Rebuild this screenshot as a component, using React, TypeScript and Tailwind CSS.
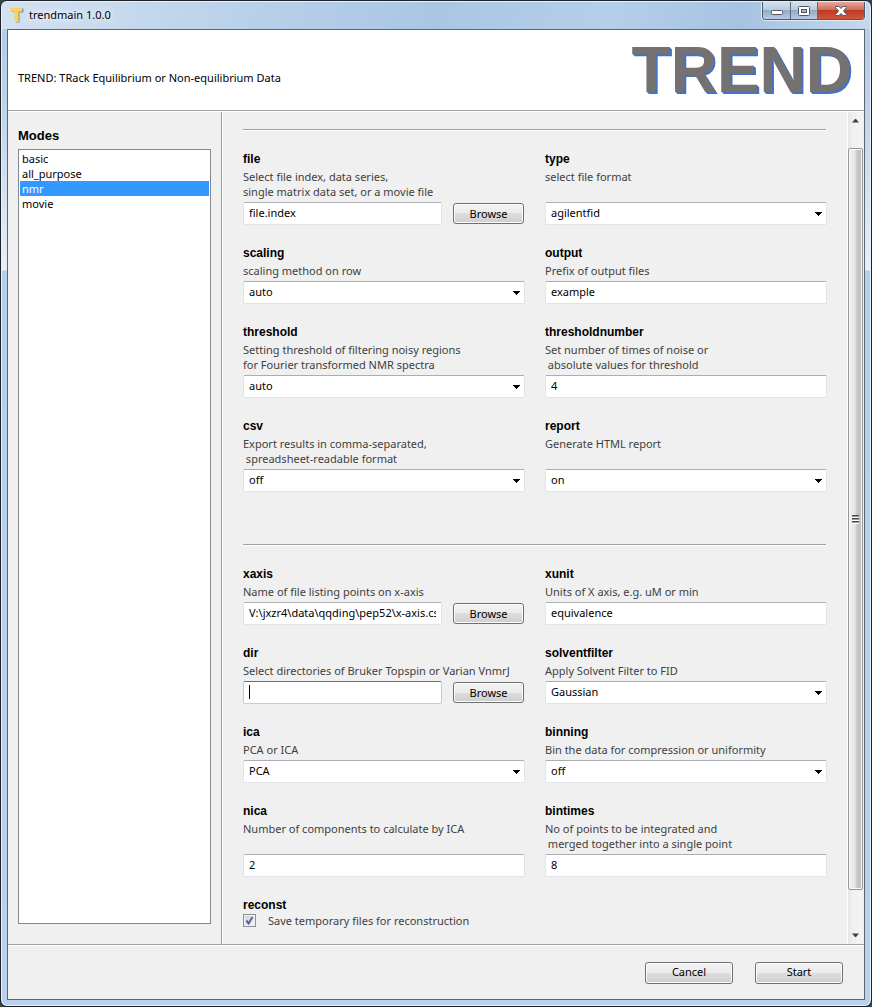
import React from "react";

const modes = ["basic", "all_purpose", "nmr", "movie"];

type FieldProps = {
  name: string;
  help: string;
  kind?: "text" | "select" | "browse";
  value: string;
  focused?: boolean;
};

const boxBase =
  "h-[23px] w-full min-w-0 rounded-[2px] border border-[#e2e3ea] border-t-[#abadb3] bg-white px-[5px] pb-[2px] text-[11px] text-black outline-none";
const boxFocused =
  "h-[23px] w-full min-w-0 rounded-[2px] border border-[#b5cfe7] border-t-[#3d7bad] bg-white px-[5px] pb-[2px] text-[11px] text-black caret-transparent outline-none";

function PushButton({ children, className }: { children: React.ReactNode; className: string }) {
  return (
    <button
      type="button"
      className={
        "rounded-[3px] border border-[#707070] bg-[linear-gradient(#f2f2f2,#ebebeb_50%,#dddddd_50%,#cfcfcf)] text-[11px] leading-[15px] text-black shadow-[inset_0_0_0_1px_#fcfcfc] " +
        className
      }
    >
      {children}
    </button>
  );
}

function Field({ name, help, kind = "text", value, focused }: FieldProps) {
  return (
    <div className="flex min-w-0 flex-col">
      <label htmlFor={name} className="font-['Liberation_Sans',sans-serif] text-[12px] leading-[18px] font-bold text-black">
        {name}
      </label>
      <p className="mt-px mb-[3px] whitespace-pre text-[#404040]">{help}</p>
      <div className="mt-auto flex items-center">
        {kind === "select" ? (
          <div className="relative w-full">
            <select id={name} defaultValue={value} className={boxBase + " appearance-none"}>
              <option>{value}</option>
            </select>
            <svg className="pointer-events-none absolute top-[10px] right-[5px]" width="7" height="4" viewBox="0 0 7 4" shapeRendering="crispEdges" aria-hidden="true">
              <path d="M0 0h7v1H6v1H5v1H4v1H3V3H2V2H1V1H0z" fill="#000" />
            </svg>
          </div>
        ) : (
          <div className="relative min-w-0 grow">
            <input id={name} type="text" defaultValue={value} className={(focused ? boxFocused : boxBase) + " block"} />
            {focused && <span className="pointer-events-none absolute top-1 left-[6px] h-[14px] w-px bg-black" />}
          </div>
        )}
        {kind === "browse" && <PushButton className="ml-[11px] mr-px h-[21px] w-[71px] shrink-0 pb-px">Browse</PushButton>}
      </div>
    </div>
  );
}

function Divider() {
  return <div className="mr-px h-[2px] border-t border-[#a0a0a0] bg-white" />;
}

const gridClass = "mt-[19px] grid grid-cols-2 gap-x-5 gap-y-[19px]";

function ScrollBar() {
  return (
    <div className="mr-px flex w-4 shrink-0 flex-col items-center border-l border-white bg-[linear-gradient(90deg,#e6e6e6,#f0f0f0_30%,#f4f4f4)]" aria-hidden="true">
      <svg width="9" height="5" viewBox="0 0 9 5" className="mt-[6px] mb-[25px]">
        <path d="M1 4.5h7L5 1H4z" fill="#404040" />
      </svg>
      <div className="flex w-[15px] grow items-center justify-center rounded-[2px] border border-[#979797] bg-[linear-gradient(90deg,#f3f3f3,#e6e6e8_45%,#c8c8cc_60%,#bdbdc1)] shadow-[inset_0_0_0_1px_#f8f8f8]">
        <svg width="8" height="9" viewBox="0 0 8 9">
          <path d="M0 0.5h7M0 3.5h7M0 6.5h7" stroke="#4a4a4a" />
          <path d="M0 1.5h7M0 4.5h7M0 7.5h7" stroke="#999" />
          <path d="M0 2.5h7M0 5.5h7M0 8.5h7" stroke="#fff" />
        </svg>
      </div>
      <svg width="9" height="5" viewBox="0 0 9 5" className="mt-[43px] mb-[6px]">
        <path d="M1 0.5h7L5 4H4z" fill="#404040" />
      </svg>
    </div>
  );
}

export default function App() {
  return (
    <div className="min-h-screen bg-[#3a3f4a] font-['Noto_Sans',sans-serif] text-[11px] leading-[15px]">
      <div className="flex min-h-screen flex-col rounded-[7px] border border-[#1c2228] bg-[linear-gradient(#c3d8ee,#b4cce6_40px,#bdd3ea_100px,#e6eff8_269px,#b4d0ec_270px,#b9d1ea)] px-[6px] pb-[6px] shadow-[inset_0_0_0_1px_#e9f2fb]">
        <header className="-mx-[5px] mt-px flex h-[27px] items-start rounded-t-[6px] bg-[linear-gradient(100deg,#d3e1f1,#b7d0ea_30%,#a9c6e3_50%,#b4cfe9_70%,#a6c3e2_85%,#c4d8ee)] pl-[8px]">
          <svg width="14" height="16" viewBox="0 0 14 16" className="mt-[5px]" aria-hidden="true">
            <path d="M2 1.500h11.500v4h-4v10H6V5H2z" fill="#8a949c" />
            <path d="M0.500 1h11.500v3.500H8.500V15H4.500V4.500H0.500z" fill="#fbd25c" />
          </svg>
          <h1 className="mt-[5px] ml-[5px] text-black [text-shadow:0_0_6px_#fff,0_0_10px_#fff]">trendmain 1.0.0</h1>
          <div className="mr-[5px] ml-auto flex h-[18px] overflow-hidden rounded-b-[4px] border border-t-0 border-[#4c5a6d] shadow-[0_0_0_1px_#e0ebf7]">
            <button type="button" aria-label="Minimize" className="flex w-7 items-end justify-center border-r border-[#5a6a80] bg-[linear-gradient(#d3dfed,#b9cadd_48%,#94abc5_50%,#b7cbe2)] pb-[4px]">
              <svg width="12" height="5" viewBox="0 0 12 5"><rect x="0.5" y="0.5" width="11" height="4" rx="1" fill="#fff" stroke="#535666" /></svg>
            </button>
            <button type="button" aria-label="Maximize" className="flex w-[27px] items-center justify-center border-r border-[#5a6a80] bg-[linear-gradient(#d3dfed,#b9cadd_48%,#94abc5_50%,#b7cbe2)]">
              <svg width="12" height="10" viewBox="0 0 12 10"><rect x="0.5" y="0.5" width="11" height="9" rx="1" fill="#fff" stroke="#535666" /><rect x="3.5" y="3.5" width="5" height="3" fill="#a3b7cf" stroke="#535666" /></svg>
            </button>
            <button type="button" aria-label="Close" className="flex w-[46px] items-center justify-center bg-[linear-gradient(#e4a99d,#d0705c_45%,#bc3a24_50%,#d0553a)]">
              <svg width="12" height="10" viewBox="0 0 12 10"><path d="M0.5 0.5h3.5l2 2 2-2h3.5v1L8.5 5l3 3.500v1H8l-2-2-2 2H0.500v-1L3.500 5l-3-3.500z" fill="#fff" stroke="#535666" /></svg>
            </button>
          </div>
        </header>

        <main className="flex grow flex-col border border-[#5c6670] bg-[#f0f0f0]">
          <div className="flex h-20 items-center justify-between bg-white pr-3 pl-[10px]">
            <p className="mt-[14px] text-black">TREND: TRack Equilibrium or Non-equilibrium Data</p>
            <div className="font-['Liberation_Sans',sans-serif] text-[64px] leading-[64px] font-bold text-[#767171] [text-shadow:1px_1px_0_#4472c4,2px_2px_0_#4472c4]">
              TREND
            </div>
          </div>
          <div className="h-[2px] border-t border-[#a0a0a0] bg-white" />

          <div className="flex grow">
            <aside className="flex w-[213px] shrink-0 flex-col px-[10px] pt-[15px] pb-5">
              <h2 className="font-['Liberation_Sans',sans-serif] text-[13px] leading-[18px] font-bold text-black">Modes</h2>
              <ul className="mt-1 grow border border-[#828790] bg-white p-px text-black">
                {modes.map((m) => (
                  <li key={m} className={m === "nmr" ? "bg-[#3399ff] px-[2px] text-white" : "px-[2px]"}>
                    {m}
                  </li>
                ))}
              </ul>
            </aside>
            <div className="w-[2px] border-l border-[#a0a0a0] bg-white" />

            <form className="min-w-0 grow pt-[17px] pr-5 pb-[15px] pl-5">
              <Divider />
              <div className={gridClass}>
                <Field name="file" help={"Select file index, data series,\nsingle matrix data set, or a movie file"} kind="browse" value="file.index" />
                <Field name="type" help="select file format" kind="select" value="agilentfid" />
                <Field name="scaling" help="scaling method on row" kind="select" value="auto" />
                <Field name="output" help="Prefix of output files" value="example" />
                <Field name="threshold" help={"Setting threshold of filtering noisy regions\nfor Fourier transformed NMR spectra"} kind="select" value="auto" />
                <Field name="thresholdnumber" help={"Set number of times of noise or\n absolute values for threshold"} value="4" />
                <Field name="csv" help={"Export results in comma-separated,\n spreadsheet-readable format"} kind="select" value="off" />
                <Field name="report" help="Generate HTML report" kind="select" value="on" />
              </div>
              <div className="mt-[52px]">
                <Divider />
              </div>
              <div className={gridClass}>
                <Field name="xaxis" help="Name of file listing points on x-axis" kind="browse" value="V:\jxzr4\data\qqding\pep52\x-axis.csv" />
                <Field name="xunit" help="Units of X axis, e.g. uM or min" value="equivalence" />
                <Field name="dir" help="Select directories of Bruker Topspin or Varian VnmrJ" kind="browse" value="" focused />
                <Field name="solventfilter" help="Apply Solvent Filter to FID" kind="select" value="Gaussian" />
                <Field name="ica" help="PCA or ICA" kind="select" value="PCA" />
                <Field name="binning" help="Bin the data for compression or uniformity" kind="select" value="off" />
                <Field name="nica" help="Number of components to calculate by ICA" value="2" />
                <Field name="bintimes" help={"No of points to be integrated and\n merged together into a single point"} value="8" />
                <div>
                  <h3 className="font-['Liberation_Sans',sans-serif] text-[12px] leading-[18px] font-bold text-black">reconst</h3>
                  <label className="-mt-px flex items-center text-[#404040]">
                    <span className="relative mr-3 flex">
                      <input
                        type="checkbox"
                        defaultChecked
                        className="size-[13px] appearance-none border border-[#8e8f8f] bg-[linear-gradient(135deg,#cbcfd5,#f6f6f6)] shadow-[inset_0_0_0_1px_#f4f4f4]"
                      />
                      <svg className="pointer-events-none absolute inset-0" width="13" height="13" viewBox="0 0 13 13" aria-hidden="true">
                        <path d="M3.500 6.500L5.500 9.500L9.500 3" fill="none" stroke="#4a5f97" strokeWidth="1.800" />
                      </svg>
                    </span>
                    Save temporary files for reconstruction
                  </label>
                </div>
              </div>
            </form>
            <ScrollBar />
          </div>

          <div className="h-[2px] border-t border-[#a0a0a0] bg-white" />
          <footer className="flex h-[53px] items-center justify-end gap-[22px] pr-[21px]">
            <PushButton className="h-[22px] w-[88px] pb-[3px]">Cancel</PushButton>
            <PushButton className="h-[22px] w-[88px] pb-[3px]">Start</PushButton>
          </footer>
        </main>
      </div>
    </div>
  );
}
